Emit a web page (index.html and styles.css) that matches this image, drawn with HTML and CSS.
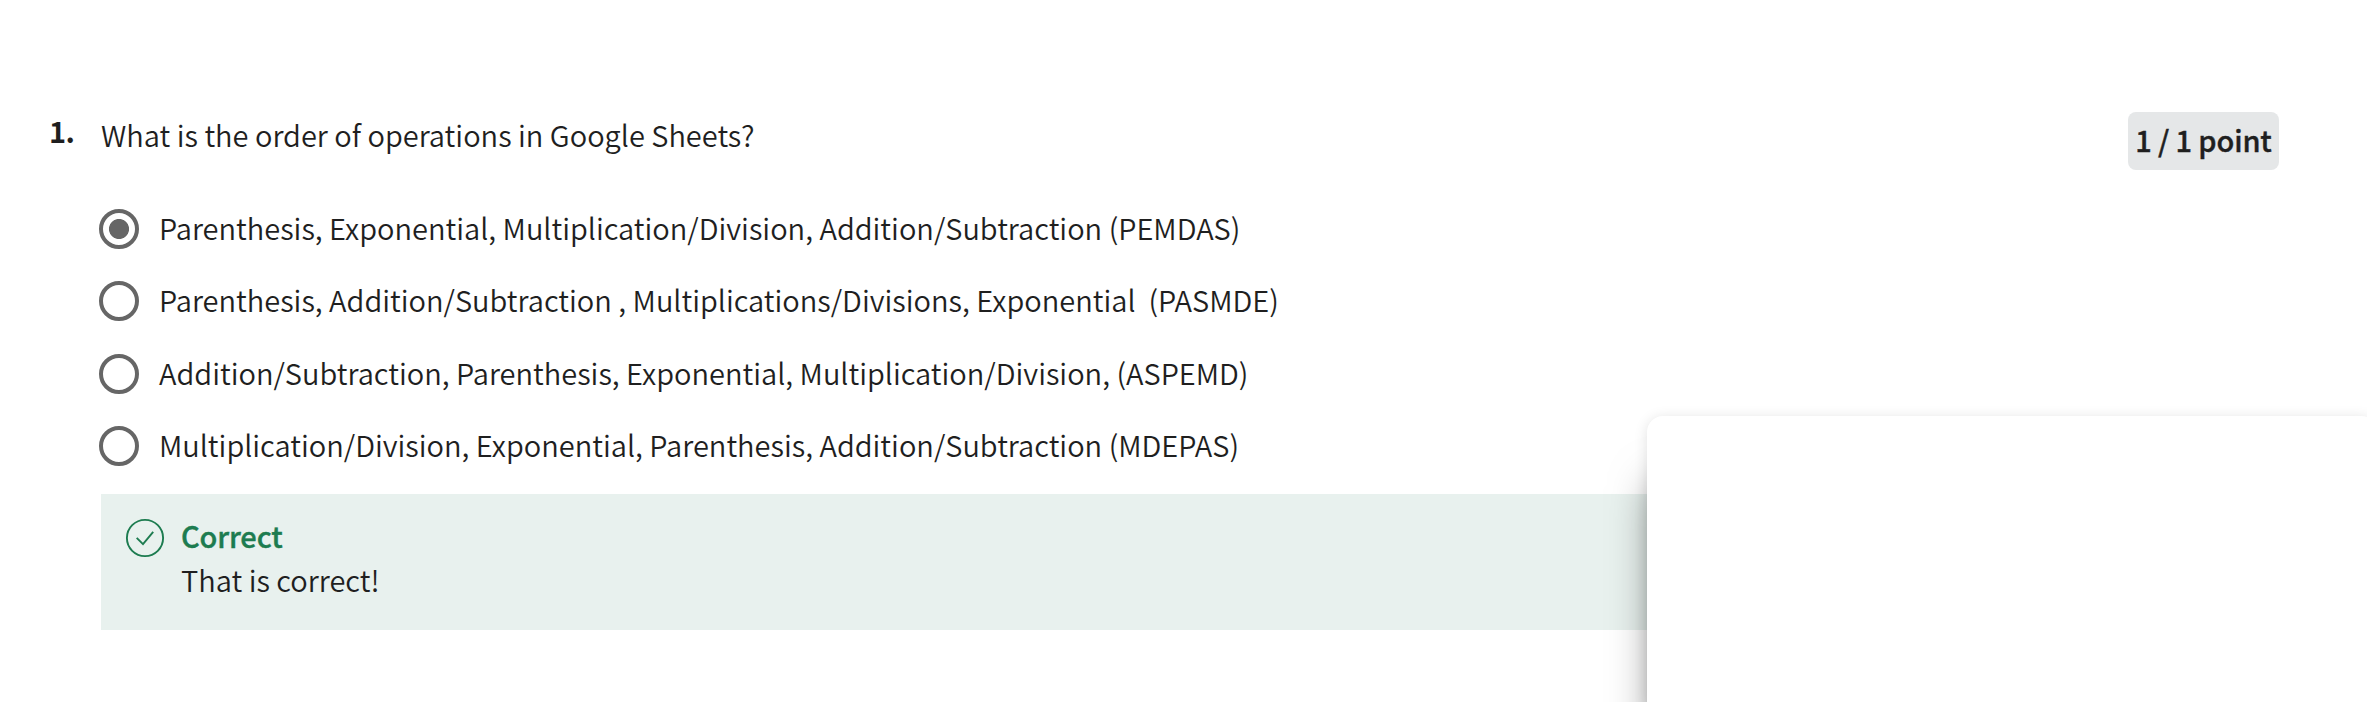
FILE: index.html
```html
<!DOCTYPE html>
<html lang="en">
<head>
<meta charset="utf-8">
<title>Quiz</title>
<link rel="stylesheet" href="styles.css">
</head>
<body>
<div class="page">
<main class="question">
  <div class="number">1.</div>
  <div class="content">
    <header class="header">
      <p class="prompt">What is the order of operations in Google Sheets?</p>
      <div class="points">1 / 1 point</div>
    </header>
    <div class="options">
      <label class="option"><span class="radio checked"></span><span>Parenthesis, Exponential, Multiplication/Division, Addition/Subtraction (PEMDAS)</span></label>
      <label class="option"><span class="radio"></span><span>Parenthesis, Addition/Subtraction , Multiplications/Divisions, Exponential &nbsp;(PASMDE)</span></label>
      <label class="option"><span class="radio"></span><span>Addition/Subtraction, Parenthesis, Exponential, Multiplication/Division, (ASPEMD)</span></label>
      <label class="option"><span class="radio"></span><span>Multiplication/Division, Exponential, Parenthesis, Addition/Subtraction (MDEPAS)</span></label>
    </div>
    <section class="feedback">
      <svg class="check" viewBox="0 0 40 40" width="40" height="40" fill="none" stroke="#1d7c50" stroke-width="1.9">
        <circle cx="20" cy="20" r="18.1"/>
        <path d="M11.7 19.8 L18 26.2 L28.2 13.8"/>
      </svg>
      <div>
        <div class="verdict">Correct</div>
        <div class="message">That is correct!</div>
      </div>
    </section>
  </div>
</main>
<aside class="panel"></aside>
</div>
</body>
</html>
```
FILE: styles.css
```css
* { box-sizing: border-box; }
body { margin: 0; background: #fff; }
.page {
  position: relative;
  width: 100%;
  height: 702px;
  overflow: hidden;
  color: #1f1f1f;
  font-family: "Noto Sans CJK SC", "Noto Sans", sans-serif;
  font-size: 29px;
  font-weight: 350;
  line-height: 40px;
}
.question { display: flex; padding: 110px 88px 0 49px; }
.number { width: 52px; font-weight: 700; letter-spacing: -.6px; }
.content { flex: 1; }
.header { display: flex; justify-content: space-between; height: 82px; }
.prompt { margin: 4px 0 0; }
.points {
  width: 151px;
  height: 58px;
  margin-top: 2px;
  border-radius: 8px;
  background: #e5e7e8;
  font-weight: 500;
  letter-spacing: -.15px;
  -webkit-text-stroke: .4px currentColor;
  line-height: 54px;
  text-align: center;
  white-space: nowrap;
}
.options { display: grid; grid-template-rows: 72px 73px 72px 85px; }
.option { display: flex; gap: 20px; margin-left: -2px; padding-top: 15px; white-space: nowrap; }
.radio {
  width: 40px;
  height: 40px;
  margin-top: 2px;
  border: 4px solid #666;
  border-radius: 50%;
}
.checked { background: radial-gradient(circle, #666 9.6px, transparent 10.4px); }
.feedback {
  display: flex;
  gap: 16px;
  height: 136px;
  padding: 20px 24px;
  background: #e8f1ee;
}
.check { margin-top: 4px; }
.verdict {
  color: #1d7c50;
  font-weight: 500;
  letter-spacing: -.15px;
  -webkit-text-stroke: .4px currentColor;
  line-height: 43px;
}
.message { line-height: 44px; }
.panel {
  position: absolute;
  top: 416px;
  left: 1647px;
  width: 730px;
  height: 286px;
  border-radius: 16px 16px 0 0;
  background: #fff;
  box-shadow: 0 2px 14px rgba(0, 0, 0, .12), 0 60px 44px -8px rgba(0, 0, 0, .5);
}
```
